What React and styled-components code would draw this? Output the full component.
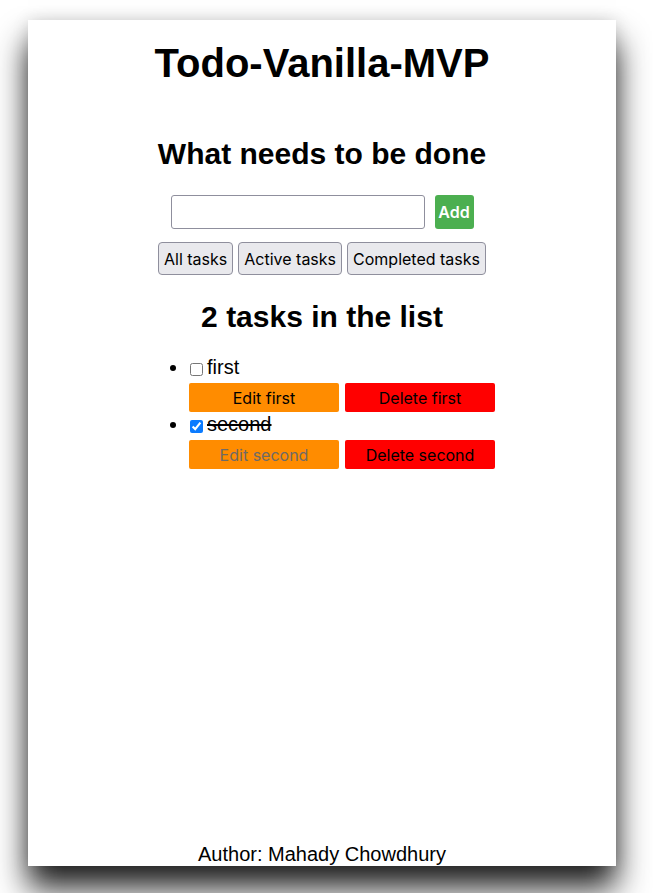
import React, { useState } from "react";
import styled, { createGlobalStyle } from "styled-components";

const Global = createGlobalStyle`
  html, body { margin: 0; padding: 0; background: #ffffff; }
  body { font-family: "Liberation Sans", Arial, Helvetica, sans-serif; color: #000; overflow: hidden; }
  * { box-sizing: border-box; }
`;

const Page = styled.div`
  width: 653px;
  height: 893px;
  padding: 20px 0 0 28px;
`;

const Window = styled.div`
  width: 588px;
  height: 846px;
  background: #fff;
  box-shadow: 0 22px 30px rgba(0, 0, 0, 0.88), 0 0 16px rgba(0, 0, 0, 0.12);
  display: flex;
  flex-direction: column;
  align-items: center;
  text-align: center;
  padding-top: 20px;
  font-size: 20px;
`;

const Title = styled.h1`
  margin: 0;
  font-size: 40px;
  line-height: 46px;
  font-weight: 700;
`;

const Heading = styled.h2`
  margin: ${(p) => p.$mt}px 0 0;
  font-size: 30px;
  line-height: 35px;
  font-weight: 700;
`;

const FormRow = styled.form`
  margin-top: 24px;
  display: flex;
  gap: 10px;
`;

const TextInput = styled.input`
  width: 254px;
  height: 34px;
  border: 1px solid #8f8f9d;
  border-radius: 3px;
  background: #fff;
  padding: 0 6px;
  font-size: 16px;
  outline: none;
`;

const AddButton = styled.button`
  width: 39px;
  height: 34px;
  padding: 0;
  border: none;
  border-radius: 3px;
  background: #4caf50;
  color: #fff;
  font-family: Inter, "Noto Sans", sans-serif;
  font-size: 16px;
  font-weight: 600;
`;

const FilterRow = styled.div`
  margin-top: 13px;
  display: flex;
  gap: 5px;
`;

const FilterButton = styled.button`
  height: 33px;
  padding: 0 5px;
  border: 1px solid #8f8f9d;
  border-radius: 4px;
  background: #e9e9ed;
  color: #000;
  font-family: Inter, "Noto Sans", sans-serif;
  font-size: 16px;
  font-weight: 400;
`;

const List = styled.ul`
  margin: 22px 0 0;
  padding-left: 40px;
  text-align: left;
  list-style: disc;
`;

const Item = styled.li`
  font-size: 20px;
  line-height: 23px;
`;

const Check = styled.input`
  width: 13px;
  height: 13px;
  margin: 0 4px 0 1px;
  vertical-align: -1.5px;
  accent-color: #0b7bff;
`;

const Label = styled.span`
  text-decoration: ${(p) => (p.$done ? "line-through" : "none")};
`;

const ButtonRow = styled.div`
  display: flex;
  gap: 6px;
  margin: 4px 0 1px;
`;

const ActionButton = styled.button`
  width: 150px;
  height: 29px;
  padding: 0;
  border: none;
  border-radius: 2px;
  background: ${(p) => (p.$kind === "delete" ? "#ff0000" : "#ff8c00")};
  color: #000;
  font-family: Inter, "Noto Sans", sans-serif;
  font-size: 16px;
  &:disabled {
    color: #6f6a66;
  }
`;

const Footer = styled.footer`
  margin-top: auto;
  font-size: 20px;
  line-height: 23px;
`;

export default function App() {
  const [tasks, setTasks] = useState([
    { id: 1, name: "first", done: false },
    { id: 2, name: "second", done: true },
  ]);

  const toggle = (id) =>
    setTasks((t) => t.map((x) => (x.id === id ? { ...x, done: !x.done } : x)));

  return (
    <>
      <Global />
      <Page>
        <Window>
          <Title>Todo-Vanilla-MVP</Title>
          <Heading $mt={50}>What needs to be done</Heading>
          <FormRow onSubmit={(e) => e.preventDefault()}>
            <TextInput type="text" />
            <AddButton type="submit">Add</AddButton>
          </FormRow>
          <FilterRow>
            <FilterButton>All tasks</FilterButton>
            <FilterButton>Active tasks</FilterButton>
            <FilterButton>Completed tasks</FilterButton>
          </FilterRow>
          <Heading $mt={24}>{tasks.length} tasks in the list</Heading>
          <List>
            {tasks.map((t) => (
              <Item key={t.id}>
                <Check type="checkbox" checked={t.done} onChange={() => toggle(t.id)} />
                <Label $done={t.done}>{t.name}</Label>
                <ButtonRow>
                  <ActionButton disabled={t.done}>Edit {t.name}</ActionButton>
                  <ActionButton $kind="delete">Delete {t.name}</ActionButton>
                </ButtonRow>
              </Item>
            ))}
          </List>
          <Footer>Author: Mahady Chowdhury</Footer>
        </Window>
      </Page>
    </>
  );
}
